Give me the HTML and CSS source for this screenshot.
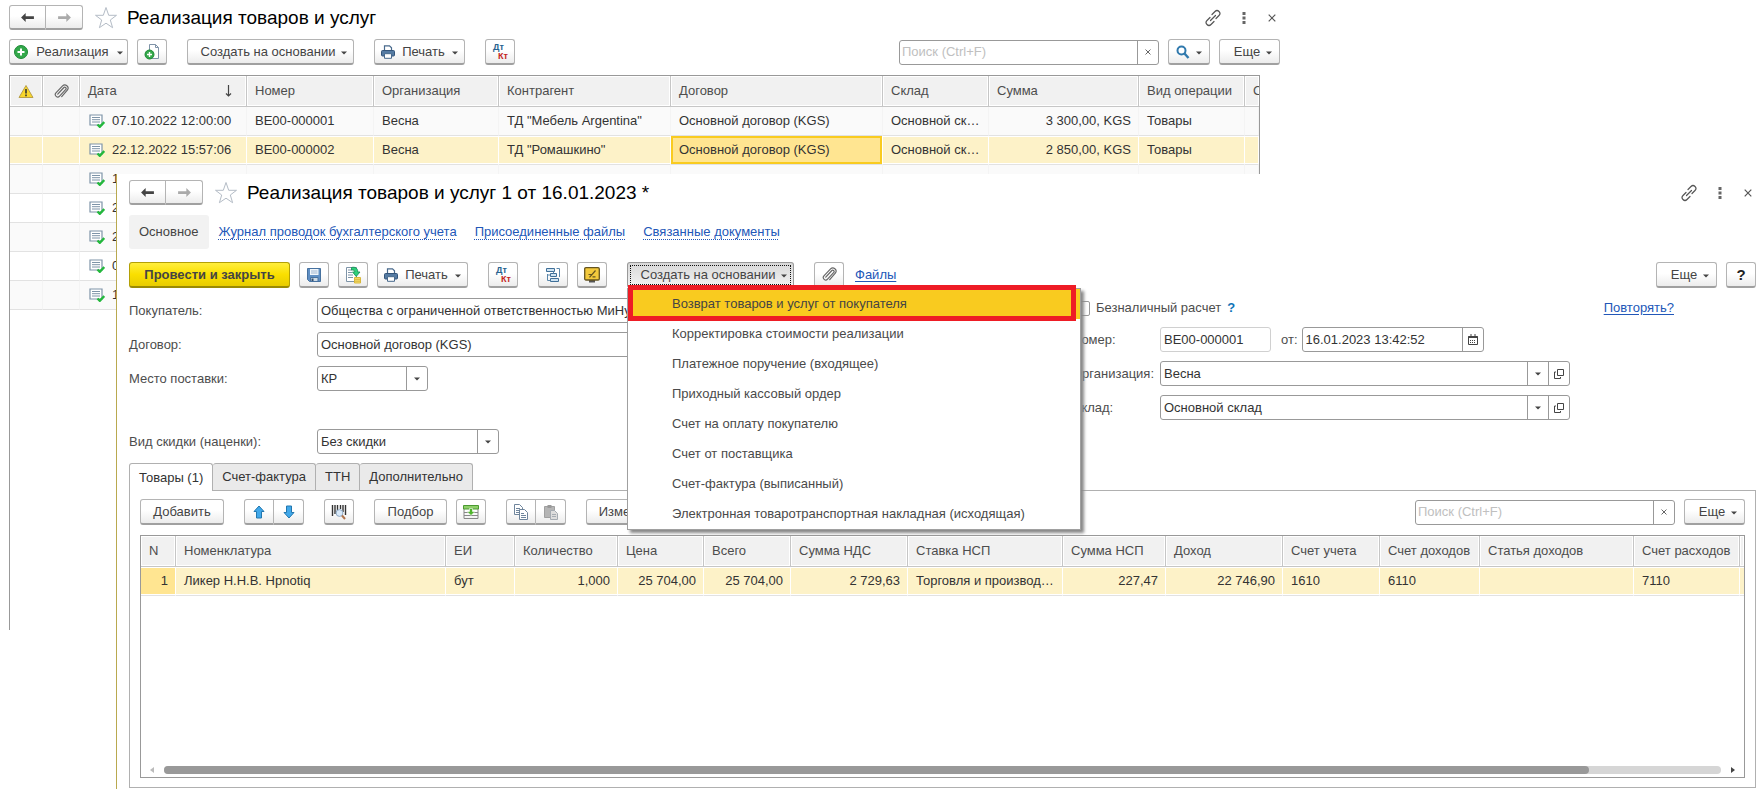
FILE: index.html
```html
<!DOCTYPE html>
<html lang="ru">
<head>
<meta charset="utf-8">
<title>Реализация товаров и услуг</title>
<link rel="stylesheet" href="styles.css">
</head>
<body>
<svg class="sprite" aria-hidden="true">
  <symbol id="i-left" viewBox="0 0 16 12"><path d="M1 6l5-5v3.500h9v3H6V11z" fill="currentColor"/></symbol>
  <symbol id="i-right" viewBox="0 0 16 12"><path d="M15 6l-5-5v3.500H1v3h9V11z" fill="currentColor"/></symbol>
  <symbol id="i-star" viewBox="0 0 24 24"><path d="M12 1.500l2.700 7.800h7.800l-6.200 4.700 2.300 7.700L12 17.200 5.400 21.700 7.700 14 1.500 9.300h7.800z" fill="#fff" stroke="#b4bcc6"/></symbol>
  <symbol id="i-link" viewBox="0 0 18 18"><g fill="none" stroke="#555" stroke-width="1.200" stroke-linecap="round"><path d="M8 5.500l3-3a2.800 2.800 0 0 1 4 4l-3 3"/><path d="M10 12.500l-3 3a2.800 2.800 0 0 1-4-4l3-3"/><path d="M6.500 11.500l5-5"/></g></symbol>
  <symbol id="i-dots" viewBox="0 0 4 12"><path d="M.5 0h3v3h-3zM.5 4.500h3v3h-3zM.5 9h3v3h-3z" fill="#666"/></symbol>
  <symbol id="i-x" viewBox="0 0 8 8"><path d="M.7.7l6.600 6.600M7.300.7L.7 7.300" stroke="#555" stroke-width="1.200"/></symbol>
  <symbol id="i-down" viewBox="0 0 6 4"><path d="M0 .5h6L3 3.500z" fill="#444"/></symbol>
  <symbol id="i-plus" viewBox="0 0 14 14"><circle cx="7" cy="7" r="6.500" fill="#33a84a" stroke="#1d8a35"/><path d="M7 3.500v7M3.500 7h7" stroke="#fff" stroke-width="2"/></symbol>
  <symbol id="i-docplus" viewBox="0 0 16 16"><path d="M5.500.5h6l3 3v11h-9z" fill="#fff" stroke="#7f93a8"/><path d="M11.500.5v3h3" fill="none" stroke="#7f93a8"/><circle cx="5.500" cy="10.500" r="4.500" fill="#33a84a" stroke="#1d8a35"/><path d="M5.500 8v5M3 10.500h5" stroke="#fff" stroke-width="1.400"/></symbol>
  <symbol id="i-print" viewBox="0 0 14 14"><path d="M3.500 6V.8h5l2 2V6" fill="#fff" stroke="#48698c" stroke-width="1.200"/><rect x=".5" y="5.500" width="13" height="5.500" rx="1" fill="#557ba3" stroke="#34557a"/><path d="M3.500 8.700h7v4.600h-7z" fill="#fff" stroke="#48698c"/></symbol>
  <symbol id="i-warn" viewBox="0 0 16 14"><path d="M8 1l7 12H1z" fill="#f8d62c" stroke="#b9a04a" stroke-linejoin="round"/><path d="M8 4.500v4.500M8 10v1.800" stroke="#333" stroke-width="1.600"/></symbol>
  <symbol id="i-clip" viewBox="0 0 14 14"><path d="M3.500 9.500l5.500-6a1.200 1.200 0 0 1 2 1.600l-5.800 6.200a2.200 2.200 0 0 1-3.400-3L8 1.800a3 3 0 0 1 4.600 3.800L7.200 11.800" fill="none" stroke="#666" stroke-width="1.100" stroke-linecap="round"/></symbol>
  <symbol id="i-doc" viewBox="0 0 16 14"><path d="M1 1h12v10H1z" fill="#fff" stroke="#7e94a8" stroke-width="1.200"/><path d="M3 3.500h8M3 5.700h8M3 8h8" stroke="#7e94a8"/><path d="M8.500 10.500l2.300 2.300L15.300 8" fill="none" stroke="#23b83c" stroke-width="2.400"/></symbol>
  <symbol id="i-sort" viewBox="0 0 7 12"><path d="M3.500 0v11M1 8.500l2.500 2.500L6 8.500" fill="none" stroke="#444" stroke-width="1.200"/></symbol>
  <symbol id="i-find" viewBox="0 0 14 14"><circle cx="5.500" cy="5.500" r="4" fill="#fff" stroke="#3079ad" stroke-width="2"/><path d="M8.500 8.500l4 4.500" stroke="#3079ad" stroke-width="2.400"/></symbol>
  <symbol id="i-save" viewBox="0 0 16 16"><path d="M1.500 1.500h13v13h-11l-2-2z" fill="#5f8fc4" stroke="#46719f"/><path d="M4 2h8.500v6H4z" fill="#f1f6fb"/><path d="M5 4h6.500M5 6h6.500" stroke="#9db4cf"/><path d="M4.500 10.500h7.500v4H4.500z" fill="#cfdbe6" stroke="#46719f"/><path d="M5.500 11.500h2v2.500h-2z" fill="#2f4c6e"/></symbol>
  <symbol id="i-post" viewBox="0 0 16 18"><path d="M1.500 1.500h10v14h-10z" fill="#fff" stroke="#7e94a8"/><path d="M3 4h4M3 6.500h4M3 9h5M3 11.500h5" stroke="#7e94a8"/><path d="M6.500 1.500c4-1 6.500 1 6.200 4.500H15l-3.800 4.500L7.500 6h2.300c0-1.500-.8-2.300-3.300-2z" fill="#2fd07a" stroke="#148a52" stroke-width=".8"/><path d="M9.500 11.500h6v5.500h-6z" fill="#f6df72" stroke="#d9b83c"/><path d="M9.500 13.300h6M9.500 15.200h6" stroke="#d9b83c"/></symbol>
  <symbol id="i-tree" viewBox="0 0 16 16"><g fill="#cfe3f2" stroke="#3f6f98"><path d="M1.500 1.500h8v3h-8zM5.500 6.500h6v3h-6zM5.500 11.500h8v3h-8z"/></g><path d="M2.500 7v6.500h3M2.500 8h3M11.500 1.500h3v8.500M8.500 4.500v2" fill="none" stroke="#5a86aa"/></symbol>
  <symbol id="i-note" viewBox="0 0 16 16"><path d="M5 13h6v2.500H5z" fill="#555"/><rect x=".7" y=".7" width="14.600" height="12.300" rx="1.200" fill="#f3c93c" stroke="#65541f" stroke-width="1.300"/><path d="M11.500 3.500L5.500 10.300M4.500 7.500h3.200M8.500 9.800h3" stroke="#65541f" stroke-width="1.200"/></symbol>
  <symbol id="i-up" viewBox="0 0 12 14"><path d="M6 1l5 5.500H8.500V13h-5V6.500H1z" fill="#41a8ea" stroke="#2277ae"/></symbol>
  <symbol id="i-dn" viewBox="0 0 12 14"><path d="M6 13l5-5.500H8.500V1h-5v6.500H1z" fill="#41a8ea" stroke="#2277ae"/></symbol>
  <symbol id="i-bar" viewBox="0 0 16 16"><path d="M1.500 1v11M4 1v9M6.500 1v7M9.500 1v4M12 1v7M14.500 1v10" stroke="#333" stroke-width="1.400"/><circle cx="8.500" cy="9" r="3.400" fill="#d9eafa" stroke="#8fa9c4"/><path d="M11 11.500l3 3.500" stroke="#b0744c" stroke-width="2"/></symbol>
  <symbol id="i-fill" viewBox="0 0 16 14"><path d="M1 4v9.500h14V4M1 7.500h14M1 10.500h14" fill="none" stroke="#888"/><path d="M.5.500h15v3.500H.5z" fill="#8fd06a" stroke="#4b9a31"/><path d="M6.500 3.500h3v3H12L8 10.500 4 6.500h2.500z" fill="#4fb52c" stroke="#fff" stroke-width=".6"/></symbol>
  <symbol id="i-copy" viewBox="0 0 16 16"><g fill="#fff" stroke="#6f859c"><path d="M1.500.5h5l3 3v7h-8z"/><path d="M6.500 5.500h5l3 3v7h-8z"/></g><path d="M3 4.500h4M3 6.500h3M3 8.500h3M8 9.500h3M8 11.500h5M8 13.500h5" stroke="#6f859c"/></symbol>
  <symbol id="i-paste" viewBox="0 0 16 16"><path d="M1.500 2.500h10v11h-10z" fill="#b5b5b5" stroke="#a0a0a0"/><path d="M4.500 1h4v3h-4z" fill="#999"/><path d="M7.500 6.500h4l3 3v6h-7z" fill="#ddd" stroke="#a5abb2"/><path d="M9 10.500h4M9 12.500h4" stroke="#a5abb2"/></symbol>
  <symbol id="i-cal" viewBox="0 0 10 11"><path d="M.5 2.500h9v8h-9z" fill="#fff" stroke="#444"/><path d="M.5 3h9" stroke="#444" stroke-width="2"/><path d="M3 0v2M7 0v2" stroke="#444"/><path d="M2 6.500h6M2 8.500h6" stroke="#444" stroke-dasharray="1 1"/></symbol>
  <symbol id="i-open" viewBox="0 0 10 10"><path d="M3.500.5h6v6h-6zM2 3H.5v6.500h6V8" fill="none" stroke="#444"/></symbol>
</svg>

<main class="desktop">
  <section class="window list-window">
    <header class="titlebar">
      <div class="btn-pair nav">
        <button class="btn" aria-label="Назад"><svg width="15" height="11"><use href="#i-left"/></svg></button>
        <button class="btn off" aria-label="Вперед"><svg width="15" height="11"><use href="#i-right"/></svg></button>
      </div>
      <svg class="star" width="24" height="24"><use href="#i-star"/></svg>
      <h1>Реализация товаров и услуг</h1>
      <div class="win-tools">
        <button aria-label="Ссылка"><svg width="18" height="18"><use href="#i-link"/></svg></button>
        <button aria-label="Меню"><svg width="4" height="12"><use href="#i-dots"/></svg></button>
        <button aria-label="Закрыть"><svg width="8" height="8"><use href="#i-x"/></svg></button>
      </div>
    </header>
    <div class="toolbar list-toolbar">
      <button class="btn add"><svg width="14" height="14"><use href="#i-plus"/></svg>Реализация<svg class="car" width="6" height="4"><use href="#i-down"/></svg></button>
      <button class="btn sq" aria-label="Создать копированием"><svg width="16" height="16"><use href="#i-docplus"/></svg></button>
      <button class="btn create sep">Создать на основании<svg class="car" width="6" height="4"><use href="#i-down"/></svg></button>
      <button class="btn print sep"><svg width="14" height="14"><use href="#i-print"/></svg>Печать<svg class="car" width="6" height="4"><use href="#i-down"/></svg></button>
      <button class="btn sq sep dk"><span class="dt">Дт</span><span class="kt">Кт</span></button>
      <div class="search"><input type="text" placeholder="Поиск (Ctrl+F)" aria-label="Поиск"><button aria-label="Очистить"><svg width="6" height="6"><use href="#i-x"/></svg></button></div>
      <button class="btn find" aria-label="Найти"><svg width="14" height="14"><use href="#i-find"/></svg><svg class="car" width="6" height="4"><use href="#i-down"/></svg></button>
      <button class="btn more">Еще<svg class="car" width="6" height="4"><use href="#i-down"/></svg></button>
    </div>
    <div class="grid-frame list-frame">
      <table class="grid">
        <colgroup><col class="w33"><col class="w37"><col class="w167"><col class="w127"><col class="w125"><col class="w172"><col><col class="w106"><col class="w150"><col class="w106"><col class="w14"></colgroup>
        <thead><tr>
          <th class="ic"><svg width="16" height="15"><use href="#i-warn"/></svg></th><th class="ic"><svg width="15" height="15"><use href="#i-clip"/></svg></th>
          <th><span class="sorted">Дата<svg width="7" height="12"><use href="#i-sort"/></svg></span></th><th>Номер</th><th>Организация</th><th>Контрагент</th><th>Договор</th><th>Склад</th><th>Сумма</th><th>Вид операции</th><th class="cut">С</th>
        </tr></thead>
        <tbody>
          <tr><td></td><td></td><td><span class="date"><svg width="16" height="14"><use href="#i-doc"/></svg>07.10.2022 12:00:00</span></td><td>BE00-000001</td><td>Весна</td><td>ТД "Мебель Argentina"</td><td>Основной договор (KGS)</td><td>Основной склад</td><td class="num">3 300,00, KGS</td><td>Товары</td><td></td></tr>
          <tr class="sel"><td></td><td></td><td><span class="date"><svg width="16" height="14"><use href="#i-doc"/></svg>22.12.2022 15:57:06</span></td><td>BE00-000002</td><td>Весна</td><td>ТД "Ромашкино"</td><td class="cur">Основной договор (KGS)</td><td>Основной склад</td><td class="num">2 850,00, KGS</td><td>Товары</td><td></td></tr>
          <tr><td></td><td></td><td><span class="date"><svg width="16" height="14"><use href="#i-doc"/></svg>1</span></td><td></td><td></td><td></td><td></td><td></td><td></td><td></td><td></td></tr>
          <tr><td></td><td></td><td><span class="date"><svg width="16" height="14"><use href="#i-doc"/></svg>2</span></td><td></td><td></td><td></td><td></td><td></td><td></td><td></td><td></td></tr>
          <tr><td></td><td></td><td><span class="date"><svg width="16" height="14"><use href="#i-doc"/></svg>2</span></td><td></td><td></td><td></td><td></td><td></td><td></td><td></td><td></td></tr>
          <tr><td></td><td></td><td><span class="date"><svg width="16" height="14"><use href="#i-doc"/></svg>0</span></td><td></td><td></td><td></td><td></td><td></td><td></td><td></td><td></td></tr>
          <tr><td></td><td></td><td><span class="date"><svg width="16" height="14"><use href="#i-doc"/></svg>1</span></td><td></td><td></td><td></td><td></td><td></td><td></td><td></td><td></td></tr>
        </tbody>
      </table>
    </div>
  </section>

  <section class="window doc-window">
    <header class="titlebar">
      <div class="btn-pair nav">
        <button class="btn" aria-label="Назад"><svg width="15" height="11"><use href="#i-left"/></svg></button>
        <button class="btn off" aria-label="Вперед"><svg width="15" height="11"><use href="#i-right"/></svg></button>
      </div>
      <svg class="star" width="24" height="24"><use href="#i-star"/></svg>
      <h1>Реализация товаров и услуг 1 от 16.01.2023 *</h1>
      <div class="win-tools">
        <button aria-label="Ссылка"><svg width="18" height="18"><use href="#i-link"/></svg></button>
        <button aria-label="Меню"><svg width="4" height="12"><use href="#i-dots"/></svg></button>
        <button aria-label="Закрыть"><svg width="8" height="8"><use href="#i-x"/></svg></button>
      </div>
    </header>
    <nav class="sections">
      <span class="current">Основное</span>
      <a href="#">Журнал проводок бухгалтерского учета</a>
      <a href="#">Присоединенные файлы</a>
      <a href="#">Связанные документы</a>
    </nav>
    <div class="toolbar doc-toolbar">
      <button class="btn primary">Провести и закрыть</button>
      <button class="btn sq" aria-label="Записать"><svg width="16" height="16"><use href="#i-save"/></svg></button>
      <button class="btn sq" aria-label="Провести"><svg width="16" height="18"><use href="#i-post"/></svg></button>
      <button class="btn print"><svg width="14" height="14"><use href="#i-print"/></svg>Печать<svg class="car" width="6" height="4"><use href="#i-down"/></svg></button>
      <button class="btn sq sep dk"><span class="dt">Дт</span><span class="kt">Кт</span></button>
      <button class="btn sq sep" aria-label="Структура подчиненности"><svg width="16" height="16"><use href="#i-tree"/></svg></button>
      <button class="btn sq" aria-label="Заметка"><svg width="16" height="16"><use href="#i-note"/></svg></button>
      <div class="menu-host sep">
        <button class="btn create pressed" aria-haspopup="menu" aria-expanded="true">Создать на основании<svg class="car" width="6" height="4"><use href="#i-down"/></svg></button>
        <div class="menu" role="menu">
          <button class="hot" role="menuitem">Возврат товаров и услуг от покупателя</button>
          <button role="menuitem">Корректировка стоимости реализации</button>
          <button role="menuitem">Платежное поручение (входящее)</button>
          <button role="menuitem">Приходный кассовый ордер</button>
          <button role="menuitem">Счет на оплату покупателю</button>
          <button role="menuitem">Счет от поставщика</button>
          <button role="menuitem">Счет-фактура (выписанный)</button>
          <button role="menuitem">Электронная товаротранспортная накладная (исходящая)</button>
          <div class="marker"></div>
        </div>
      </div>
      <button class="btn sq sep" aria-label="Присоединить"><svg width="15" height="15"><use href="#i-clip"/></svg></button>
      <a class="files" href="#">Файлы</a>
      <button class="btn more push">Еще<svg class="car" width="6" height="4"><use href="#i-down"/></svg></button>
      <button class="btn sq help">?</button>
    </div>

    <div class="form">
      <div class="form-left">
        <label for="buyer">Покупатель:</label>
        <div class="field"><input id="buyer" type="text" value="Общества с ограниченной ответственностью МиНур"></div>
        <label for="contract">Договор:</label>
        <div class="field"><input id="contract" type="text" value="Основной договор (KGS)"></div>
        <label for="place">Место поставки:</label>
        <div class="field place"><select id="place"><option>КР</option></select><span class="part"><svg width="6" height="4"><use href="#i-down"/></svg></span></div>
        <label class="apart" for="discount">Вид скидки (наценки):</label>
        <div class="field discount apart"><select id="discount"><option>Без скидки</option></select><span class="part"><svg width="6" height="4"><use href="#i-down"/></svg></span></div>
      </div>
      <div class="form-right">
        <div class="cash"><label><input type="checkbox">Безналичный расчет</label><button class="hint">?</button><a href="#">Повторять?</a></div>
        <label for="num">Номер:</label>
        <div class="num-row">
          <div class="field pale"><input id="num" type="text" value="BE00-000001"></div>
          <div class="dated">
            <label for="when">от:</label>
            <div class="field when"><input id="when" type="text" value="16.01.2023 13:42:52"><button class="part" aria-label="Календарь"><svg width="10" height="11"><use href="#i-cal"/></svg></button></div>
          </div>
        </div>
        <label for="org">Организация:</label>
        <div class="field wide"><select id="org"><option>Весна</option></select><span class="part"><svg width="6" height="4"><use href="#i-down"/></svg></span><button class="part" aria-label="Открыть"><svg width="10" height="10"><use href="#i-open"/></svg></button></div>
        <label for="store">Склад:</label>
        <div class="field wide"><select id="store"><option>Основной склад</option></select><span class="part"><svg width="6" height="4"><use href="#i-down"/></svg></span><button class="part" aria-label="Открыть"><svg width="10" height="10"><use href="#i-open"/></svg></button></div>
      </div>
    </div>

    <div class="tabs" role="tablist">
      <button role="tab" aria-selected="true">Товары (1)</button>
      <button role="tab">Счет-фактура</button>
      <button role="tab">ТТН</button>
      <button role="tab">Дополнительно</button>
    </div>
    <div class="panel">
      <div class="toolbar">
        <button class="btn add-row">Добавить</button>
        <div class="btn-pair sep">
          <button class="btn" aria-label="Вверх"><svg width="12" height="14"><use href="#i-up"/></svg></button>
          <button class="btn" aria-label="Вниз"><svg width="12" height="14"><use href="#i-dn"/></svg></button>
        </div>
        <button class="btn sq sep" aria-label="Поиск по штрихкоду"><svg width="16" height="16"><use href="#i-bar"/></svg></button>
        <button class="btn pick sep">Подбор</button>
        <button class="btn sq" aria-label="Заполнить"><svg width="16" height="14"><use href="#i-fill"/></svg></button>
        <div class="btn-pair sep">
          <button class="btn" aria-label="Копировать"><svg width="16" height="16"><use href="#i-copy"/></svg></button>
          <button class="btn off" aria-label="Вставить"><svg width="16" height="16"><use href="#i-paste"/></svg></button>
        </div>
        <button class="btn change sep">Изменить</button>
        <div class="search"><input type="text" placeholder="Поиск (Ctrl+F)" aria-label="Поиск по таблице"><button aria-label="Очистить"><svg width="6" height="6"><use href="#i-x"/></svg></button></div>
        <button class="btn more">Еще<svg class="car" width="6" height="4"><use href="#i-down"/></svg></button>
      </div>
      <div class="grid-frame goods">
        <table class="grid">
          <colgroup><col class="w35"><col><col class="w69"><col class="w103"><col class="w86"><col class="w87"><col class="w117"><col class="w155"><col class="w103"><col class="w117"><col class="w97"><col class="w100"><col class="w154"><col class="w106"><col class="w4"></colgroup>
          <thead><tr><th>N</th><th>Номенклатура</th><th>ЕИ</th><th>Количество</th><th>Цена</th><th>Всего</th><th>Сумма НДС</th><th>Ставка НСП</th><th>Сумма НСП</th><th>Доход</th><th>Счет учета</th><th>Счет доходов</th><th>Статья доходов</th><th>Счет расходов</th><th class="cut"></th></tr></thead>
          <tbody><tr class="sel"><td class="num mark">1</td><td>Ликер Н.Н.В. Hpnotiq</td><td>бут</td><td class="num">1,000</td><td class="num">25 704,00</td><td class="num">25 704,00</td><td class="num">2 729,63</td><td>Торговля и производ…</td><td class="num">227,47</td><td class="num">22 746,90</td><td>1610</td><td>6110</td><td></td><td>7110</td><td class="cut"></td></tr></tbody>
        </table>
        <div class="hscroll">
          <svg width="4" height="6" viewBox="0 0 4 6"><path d="M4 0v6L0 3z" fill="#bbb"/></svg>
          <div class="track"><div class="thumb"></div></div>
          <svg width="4" height="6" viewBox="0 0 4 6"><path d="M0 0v6l4-3z" fill="#444"/></svg>
        </div>
      </div>
    </div>
  </section>
</main>
</body>
</html>
```
FILE: styles.css
```css
* { box-sizing: border-box; }
body { margin: 0; background: #fff; color: #333; font: 13px/16px "Liberation Sans", Arial, sans-serif; }
button, input, select { font: inherit; color: inherit; margin: 0; }
button { padding: 0; border: 0; background: none; }
svg { display: block; flex: none; }
a { color: #2257b8; text-underline-offset: 2px; }
.sprite { position: absolute; width: 0; height: 0; }

.desktop { position: relative; min-height: 100vh; overflow: hidden; }
.window { background: #fff; }
.list-window { width: calc(100% - 479px); padding: 5px 0 0 9px; }
.doc-window { position: absolute; inset: 174px 0 0 116px; display: flex; flex-direction: column; padding: 6px 3px 1px 12px; border-left: 1px solid #b9a94f; }

.titlebar { display: flex; align-items: center; height: 25px; }
.titlebar h1 { margin: 0 0 0 9px; font-size: 19px; line-height: 24px; font-weight: 400; color: #000; }
.star { margin-left: 11px; }
.win-tools { display: flex; align-items: center; gap: 20px; margin-left: auto; padding-right: 4px; }
.win-tools button:nth-child(2) { padding: 0 2px 0 0; }

.toolbar { display: flex; align-items: center; gap: 9px; height: 26px; }
.toolbar .sep { margin-left: 11px; }
.btn { display: flex; align-items: center; justify-content: center; height: 26px; border: 1px solid #b4b4b4; border-bottom: 2px solid #a0a0a0; border-radius: 3px; background: linear-gradient(#fff 45%, #ececec); color: #444; white-space: nowrap; }
.btn .car { margin: 2px 0 0 6px; }
.sq { width: 30px; }
.add { width: 119px; gap: 8px; }
.btn.add .car, .btn.print .car { margin-left: 0; }
.create { width: 167px; padding-left: 7px; }
.print { width: 91px; gap: 7px; }
.more { width: 61px; padding-left: 7px; }
.find { width: 42px; }
.add-row { width: 84px; }
.pick { width: 73px; }
.change { width: 84px; }
.primary { width: 161px; border-color: #b3a006; border-bottom-color: #9a8a04; background: linear-gradient(#ffee3c, #fadf00 50%, #e8cc00); font-weight: 700; }
.pressed { border-color: #999; background: linear-gradient(#d8d8d8, #f2f2f2); outline: 1px dotted #111; outline-offset: -4px; }
.help { font-size: 15px; font-weight: 700; color: #222; }
.btn-pair { display: flex; }
.btn-pair .btn { width: 30px; border-radius: 3px 0 0 3px; }
.btn-pair .btn + .btn { border-left: 0; border-radius: 0 3px 3px 0; }
.btn-pair.nav .btn { width: 37px; height: 25px; }
.nav .off { color: #aaa; }
.dk { font-size: 9px; line-height: 9px; font-weight: 700; flex-direction: column; }
.dt { color: #28628f; align-self: flex-start; padding-left: 7px; }
.kt { color: #c4241c; align-self: flex-end; padding-right: 6px; }

.search { display: flex; width: 260px; height: 25px; margin-left: auto; border: 1px solid #999; border-radius: 3px; background: #fff; }
.search input { flex: 1; min-width: 0; border: 0; padding: 0 2px; background: none; }
.search input::placeholder { color: #c0c0c0; opacity: 1; }
.search button { display: flex; align-items: center; justify-content: center; width: 21px; border-left: 1px solid #999; }

.list-toolbar { margin-top: 9px; }

.grid-frame { border: 1px solid #999; overflow: hidden; background: #fff; }
.list-frame { height: 555px; margin: 10px 20px 0 0; border-bottom: 0; }
.grid { width: 100%; table-layout: fixed; border-collapse: separate; border-spacing: 0; }
.grid th, .grid td { padding: 0 8px; overflow: hidden; white-space: nowrap; text-align: left; font-weight: 400; text-overflow: ellipsis; }
.grid th { height: 31px; border-right: 1px solid #c6c6c6; border-bottom: 1px solid #c6c6c6; background: #f1f1f1; box-shadow: inset 0 0 0 1px #fff; color: #4d4d4d; }
.grid td { height: 29px; border-bottom: 1px solid #e2e2e2; border-right: 1px solid #fff; }
.list-frame tbody td { border-right-color: #f4f4f4; }
.list-frame tbody tr:nth-child(odd) td { background: #fafafa; }
.grid tbody .sel td { background: #fdf2c8; border-right-color: #fff; box-shadow: inset 0 1px #fff, inset 0 -1px #fff; }
.grid tbody .sel .cur { background: #ffe591; box-shadow: inset 0 0 0 2px #f9cb1f; }
.grid tbody .sel .mark { background: #ffe591; }
.grid .num { text-align: right; padding-right: 7px; }
.grid .cut { padding-right: 0; border-right: 0; text-overflow: clip; }
.goods .cut { padding: 0; }
.goods td { text-overflow: clip; }
.grid .ic { padding: 0; }
.ic svg { margin: 0 auto; }
.sorted { display: flex; justify-content: space-between; align-items: center; padding-right: 6px; }
.date { display: flex; align-items: center; gap: 7px; padding-left: 1px; }
.w4 { width: 4px; } .w14 { width: 14px; } .w33 { width: 33px; } .w35 { width: 35px; } .w37 { width: 37px; }
.w69 { width: 69px; } .w86 { width: 86px; } .w87 { width: 87px; } .w97 { width: 97px; } .w100 { width: 100px; }
.w103 { width: 103px; } .w106 { width: 106px; } .w117 { width: 117px; } .w125 { width: 125px; } .w127 { width: 127px; }
.w150 { width: 150px; } .w154 { width: 154px; } .w155 { width: 155px; } .w167 { width: 167px; } .w172 { width: 172px; }

.sections { display: flex; align-items: center; gap: 18px; margin-top: 10px; }
.sections a { text-decoration-style: dotted; text-decoration-thickness: 1px; text-underline-offset: 3px; }
.current { margin-right: -8px; padding: 9px 10px; border-radius: 3px; background: #f2f2f2; color: #444; }
.doc-toolbar { margin-top: 13px; }
.files { margin-left: 2px; }
.push { margin-left: auto; }

.menu-host { position: relative; }
.menu { position: absolute; z-index: 2; top: 26px; left: 0; width: 454px; border: 1px solid #a0a0a0; background: #fff; box-shadow: 3px 3px 3px #888; }
.menu button { display: block; width: 100%; height: 30px; padding-left: 44px; text-align: left; color: #4a4a4a; }
.menu .hot { background: #f9cb1f; color: #444; }
.marker { position: absolute; top: -4px; left: 0; right: 4px; height: 36px; border: 5px solid #ee1c25; pointer-events: none; }

.form { display: grid; grid-template-columns: minmax(0, 1fr) 684px; margin-top: 10px; color: #4d4d4d; }
.form-left { display: grid; grid-template-columns: 188px minmax(0, 1fr); gap: 9px 0; align-items: center; align-content: start; padding-right: 24px; }
.apart { margin-top: 29px; }
.field { display: flex; height: 25px; border: 1px solid #999; border-radius: 3px; background: #fff; color: #333; }
.field input, .field select { flex: 1; min-width: 0; padding: 0 3px; border: 0; background: none; appearance: none; }
.part { display: flex; align-items: center; justify-content: center; width: 21px; border-left: 1px solid #999; }
.place { width: 111px; }
.discount { width: 182px; }
.pale { width: 111px; border-color: #d0d0d0; }
.when { width: 182px; }
.wide { width: 410px; }
.form-right { display: grid; grid-template-columns: 88px 1fr; gap: 9px 0; align-items: center; align-content: start; }
.cash { grid-column: 1 / -1; display: flex; align-items: center; height: 20px; }
.cash label { display: flex; align-items: center; gap: 6px; }
.cash input { appearance: none; width: 15px; height: 15px; margin-left: 3px; border: 1px solid #999; border-radius: 2px; }
.cash a { margin-left: auto; margin-right: 82px; }
.hint { margin-left: 6px; color: #0e74b8; font-weight: 700; }
.num-row { display: flex; align-items: center; gap: 10px; }
.dated { display: flex; align-items: center; gap: 4px; }

.tabs { display: flex; margin-top: 9px; }
.tabs button { height: 27px; padding: 0 9px; border: 1px solid #b0b0b0; border-left: 0; border-bottom: 0; border-radius: 3px 3px 0 0; background: #eaeaea; }
.tabs button:first-child { border-left: 1px solid #b0b0b0; height: 28px; margin-bottom: -1px; background: #fff; z-index: 1; }
.panel { flex: 1; display: flex; flex-direction: column; border: 1px solid #b0b0b0; padding: 8px 10px 9px; }
.goods { flex: 1; display: flex; flex-direction: column; margin-top: 10px; }
.hscroll { display: flex; align-items: center; gap: 10px; margin-top: auto; padding: 0 9px 3px 9px; }
.track { flex: 1; height: 8px; border-radius: 4px; background: #d6d6d6; }
.thumb { width: 91.5%; height: 8px; border-radius: 4px; background: #999; }
```
